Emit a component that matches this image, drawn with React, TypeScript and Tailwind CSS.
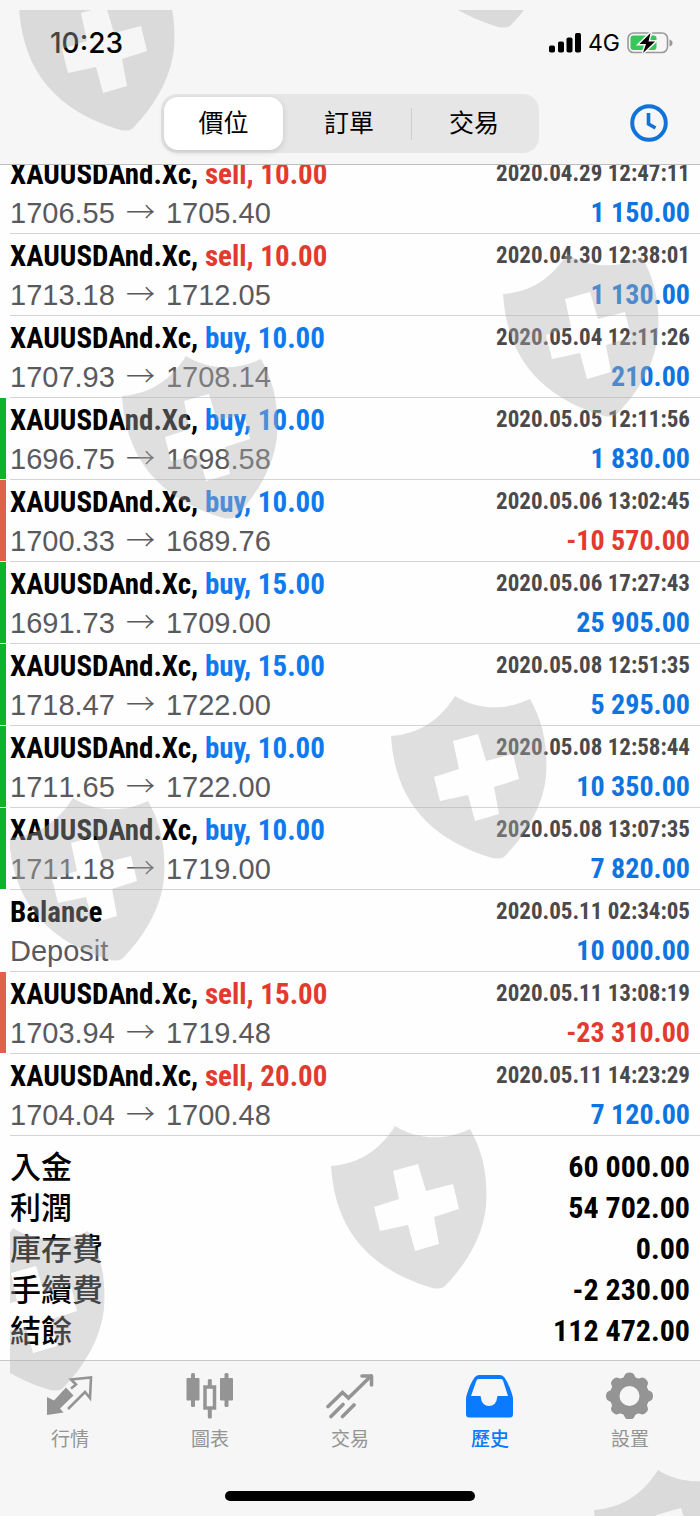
import React from 'react';
import clsx from 'clsx';

interface Deal {
  symbol: string;
  side?: 'buy' | 'sell';
  volume?: string;
  open?: string;
  close?: string;
  note?: string;
  time: string;
  amount: string;
  mark?: 'profit' | 'loss';
}

const SYMBOL = 'XAUUSDAnd.Xc';

const deals: Deal[] = [
  { symbol: SYMBOL, side: 'sell', volume: '10.00', open: '1706.55', close: '1705.40', time: '2020.04.29 12:47:11', amount: '1 150.00' },
  { symbol: SYMBOL, side: 'sell', volume: '10.00', open: '1713.18', close: '1712.05', time: '2020.04.30 12:38:01', amount: '1 130.00' },
  { symbol: SYMBOL, side: 'buy', volume: '10.00', open: '1707.93', close: '1708.14', time: '2020.05.04 12:11:26', amount: '210.00' },
  { symbol: SYMBOL, side: 'buy', volume: '10.00', open: '1696.75', close: '1698.58', time: '2020.05.05 12:11:56', amount: '1 830.00', mark: 'profit' },
  { symbol: SYMBOL, side: 'buy', volume: '10.00', open: '1700.33', close: '1689.76', time: '2020.05.06 13:02:45', amount: '-10 570.00', mark: 'loss' },
  { symbol: SYMBOL, side: 'buy', volume: '15.00', open: '1691.73', close: '1709.00', time: '2020.05.06 17:27:43', amount: '25 905.00', mark: 'profit' },
  { symbol: SYMBOL, side: 'buy', volume: '15.00', open: '1718.47', close: '1722.00', time: '2020.05.08 12:51:35', amount: '5 295.00', mark: 'profit' },
  { symbol: SYMBOL, side: 'buy', volume: '10.00', open: '1711.65', close: '1722.00', time: '2020.05.08 12:58:44', amount: '10 350.00', mark: 'profit' },
  { symbol: SYMBOL, side: 'buy', volume: '10.00', open: '1711.18', close: '1719.00', time: '2020.05.08 13:07:35', amount: '7 820.00', mark: 'profit' },
  { symbol: 'Balance', note: 'Deposit', time: '2020.05.11 02:34:05', amount: '10 000.00' },
  { symbol: SYMBOL, side: 'sell', volume: '15.00', open: '1703.94', close: '1719.48', time: '2020.05.11 13:08:19', amount: '-23 310.00', mark: 'loss' },
  { symbol: SYMBOL, side: 'sell', volume: '20.00', open: '1704.04', close: '1700.48', time: '2020.05.11 14:23:29', amount: '7 120.00' },
];

const totals = [
  { label: '入金', value: '60 000.00' },
  { label: '利潤', value: '54 702.00' },
  { label: '庫存費', value: '0.00' },
  { label: '手續費', value: '-2 230.00' },
  { label: '結餘', value: '112 472.00' },
];

const shields = [
  [19, -32],
  [397, -135],
  [503, 254],
  [122, 356],
  [391, 696],
  [9, 798],
  [331, 1126],
  [-51, 1228],
  [594, 1470],
];

const StatusBar = () => (
  <div className="flex h-[86px] items-center justify-between pl-[50px] pr-[27px]">
    <span className="text-[28px] leading-8 font-medium text-black">10:23</span>
    <div className="flex items-center gap-[7px]">
      <svg className="h-5 w-8" viewBox="0 0 32 20" aria-hidden="true">
        <rect x="0" y="12.5" width="6" height="7" rx="1.8" />
        <rect x="9" y="8.5" width="6" height="11" rx="1.8" />
        <rect x="17.5" y="4.5" width="6" height="15" rx="1.8" />
        <rect x="26" y="0" width="6" height="19.5" rx="1.8" />
      </svg>
      <span className="text-[23px] leading-8 text-black">4G</span>
      <svg className="h-[22px] w-[46px]" viewBox="0 0 46 22" aria-hidden="true">
        <rect x="1" y="1" width="39.5" height="19.5" rx="5.5" fill="none" stroke="#999" strokeWidth="1.6" />
        <path d="M42.5 7.5Q45.5 8.5 45.5 11T42.5 14.5Z" fill="#999" />
        <rect x="3.5" y="3.5" width="26" height="14.5" rx="3" fill="#35c759" />
        <path d="M23.5 1L12.5 12H19L16 21L28 9.5H21.5Z" fill="#000" stroke="#f6f6f6" strokeWidth="3" paintOrder="stroke" />
      </svg>
    </div>
  </div>
);

const Header = () => (
  <header className="relative z-10 border-b border-[#bdbdbd] bg-[#f6f6f6]">
    <StatusBar />
    <div className="grid grid-cols-[1fr_54%_1fr] items-center pt-2 pb-[11px]">
      <div className="col-start-2 flex h-[59px] items-center rounded-2xl bg-[#e6e6e6] p-[3px] text-[25px] text-black">
        <button type="button" className="mr-1 h-full w-[32%] rounded-[14px] bg-white shadow-[0_2px_6px_rgba(0,0,0,0.14)]">
          價位
        </button>
        <button type="button" className="h-full flex-1">訂單</button>
        <span className="h-8 w-px bg-[#cfcfcf]" />
        <button type="button" className="h-full flex-1">交易</button>
      </div>
      <button type="button" aria-label="History period" className="mr-[31px] justify-self-end">
        <svg className="size-10" viewBox="0 0 40 40" fill="none" stroke="#1173d8" strokeWidth="4">
          <circle cx="20" cy="19" r="16.8" />
          <path d="M19.5 9V20L26.5 24" strokeWidth="3.6" />
        </svg>
      </button>
    </div>
  </header>
);

const DealRow = ({ deal }: { deal: Deal }) => (
  <li className="flex h-[82px]">
    <span
      className={clsx(
        'mb-px w-[6px]',
        deal.mark === 'profit' && 'bg-[#0cb42a]',
        deal.mark === 'loss' && 'bg-[#df604f]',
      )}
    />
    <div className="ml-1 flex flex-1 justify-between border-b border-[#d4d4d4] pr-[10px]">
      <div>
        <p className="font-['Roboto_Condensed',sans-serif] text-[29px] leading-[44px] font-bold text-black">
          {deal.symbol}
          {deal.side && (
            <>
              ,{' '}
              <span className={deal.side === 'sell' ? 'text-[#e23a2e]' : 'text-[#0f7af0]'}>
                {deal.side}, {deal.volume}
              </span>
            </>
          )}
        </p>
        <p className="font-['Liberation_Sans',sans-serif] text-[29px] leading-[34px] text-[#5a5a5e] [font-kerning:none]">
          {deal.note ?? (
            <>
              {deal.open}{' '}
              <span className="mx-[3px] font-['Noto_Sans_CJK_TC',sans-serif] leading-none font-light">→</span>{' '}
              {deal.close}
            </>
          )}
        </p>
      </div>
      <div className="text-right font-['Roboto_Condensed',sans-serif] font-bold">
        <p className="text-[23px] leading-[44px] text-[#4a4a4c]">{deal.time}</p>
        <p
          className={clsx(
            'text-[28px] leading-[34px]',
            deal.amount.startsWith('-') ? 'text-[#e23a2e]' : 'text-[#0f74e0]',
          )}
        >
          {deal.amount}
        </p>
      </div>
    </div>
  </li>
);

const QuotesIcon = () => (
  <svg className="size-12" viewBox="0 0 48 48" aria-hidden="true">
    <path d="M1 26L8 29.5L20 16.5L27.5 24.5L14 37.5L17.5 41.5L1 44Z" fill="currentColor" />
    <path d="M25 17.5L30 13.5L25 8.5L45 6.5L44 27L39 21L22 38" fill="none" stroke="currentColor" strokeWidth="2.6" />
  </svg>
);

const ChartIcon = () => (
  <svg className="size-12" viewBox="0 0 48 48" fill="currentColor" aria-hidden="true">
    <rect x="0.5" y="7" width="13" height="22.5" rx="1" />
    <rect x="5" y="2" width="4" height="34" rx="1.5" />
    <rect x="34" y="7" width="13" height="22.5" rx="1" />
    <rect x="38.5" y="2" width="4" height="34" rx="1.5" />
    <rect x="19" y="16" width="9.5" height="21" fill="none" stroke="currentColor" strokeWidth="3.5" />
    <rect x="21.8" y="8" width="4" height="7" rx="1.5" />
    <rect x="21.8" y="37" width="4" height="10.5" rx="1.5" />
  </svg>
);

const TradeIcon = () => (
  <svg className="size-12" viewBox="0 0 48 48" fill="none" stroke="currentColor" strokeWidth="3.6" strokeLinecap="round" aria-hidden="true">
    <path d="M2 35.5L16.5 21.5L22.5 27L45 5" />
    <path d="M36 5H45.5V14" strokeLinejoin="round" />
    <path d="M5 45.5L17 33.5M16.5 45.5L28 34" />
  </svg>
);

const HistoryIcon = () => (
  <svg className="size-12" viewBox="0 0 48 48" fill="currentColor" aria-hidden="true">
    <path
      fillRule="evenodd"
      d="M8.5 6.5Q10 4 13 4H34Q37 4 38.5 6.5Q43 13 46 23Q47 26 47 28V43Q47 46.5 44 46.5H3Q0 46.5 0 43V28Q0 26 1 23Q4 13 8.5 6.5ZM12.5 8Q11 8 10.5 9.5L5 25H14Q15 25 15 27A8 8 0 0 0 31 27Q31 25 32 25H42L37 9.5Q36.5 8 35 8Z"
    />
  </svg>
);

const SettingsIcon = () => (
  <svg className="size-12" viewBox="0 0 48 48" aria-hidden="true">
    <circle cx="23.5" cy="25" r="14.8" fill="none" stroke="currentColor" strokeWidth="9.6" />
    {[0, 45, 90, 135, 180, 225, 270, 315].map((angle) => (
      <path
        key={angle}
        d="M16 8Q18 6.5 18.5 4.5Q19.5 1.5 23.5 1.5T28.5 4.5Q29 6.5 31 8Z"
        fill="currentColor"
        transform={`rotate(${angle} 23.5 25)`}
      />
    ))}
  </svg>
);

const navItems = [
  { label: '行情', icon: QuotesIcon },
  { label: '圖表', icon: ChartIcon },
  { label: '交易', icon: TradeIcon },
  { label: '歷史', icon: HistoryIcon, active: true },
  { label: '設置', icon: SettingsIcon },
];

const BottomNav = () => (
  <footer className="border-t border-[#c8c8c8] bg-[#f6f6f6] pb-[15px]">
    <nav className="grid grid-cols-5 pt-[10px]">
      {navItems.map(({ label, icon: Icon, active }) => (
        <a
          key={label}
          href="#"
          aria-current={active ? 'page' : undefined}
          className={clsx('flex flex-col items-center gap-2', active ? 'text-[#0a7aff]' : 'text-[#949494]')}
        >
          <Icon />
          <span className={clsx('text-[19px] leading-[26px]', active && 'font-medium')}>{label}</span>
        </a>
      ))}
    </nav>
    <div className="mx-auto mt-[38px] h-[10px] w-[250px] rounded-full bg-black" />
  </footer>
);

// Repeated translucent shield, clipped by a small margin at the top left
const Watermark = () => (
  <svg className="pointer-events-none absolute inset-0 z-20 h-full w-full" aria-hidden="true">
    <defs>
      <clipPath id="watermark-area">
        <rect x="10" y="10" width="100%" height="100%" />
      </clipPath>
      <path
        id="shield"
        fillRule="evenodd"
        d="M0 40C28 38 49 24 64 0C87 14 113 15 139 3C152 26 157 50 155 80C152 112 133 141 113 161Q107 164 98 161C38 142 4 104 0 40ZM62 45L68 73L43 81L49 105L77 99L84 125L108 118L103 91L128 83L122 58L95 65L87 38Z"
      />
    </defs>
    <g clipPath="url(#watermark-area)" fill="#b0b0b0" fillOpacity="0.39">
      {shields.map(([x, y]) => (
        <use key={`${x}-${y}`} href="#shield" x={x} y={y} />
      ))}
    </g>
  </svg>
);

export default function App() {
  return (
    <div className="relative flex min-h-screen flex-col bg-[#fefefe] font-[Inter,'Noto_Sans_CJK_TC',sans-serif]">
      <Header />
      <main className="flex-1 overflow-hidden">
        {/* The list is scrolled a little under the header */}
        <ul className="-mt-[13px]">
          {deals.map((deal) => (
            <DealRow key={deal.time} deal={deal} />
          ))}
        </ul>
        <dl className="px-[10px] pt-[10px] pb-[9px] text-black">
          {totals.map(({ label, value }) => (
            <div key={label} className="flex items-center justify-between leading-[41px]">
              <dt className="text-[31px] font-medium">{label}</dt>
              <dd className="font-['Roboto_Condensed',sans-serif] text-[30px] font-bold">{value}</dd>
            </div>
          ))}
        </dl>
      </main>
      <BottomNav />
      <Watermark />
    </div>
  );
}
